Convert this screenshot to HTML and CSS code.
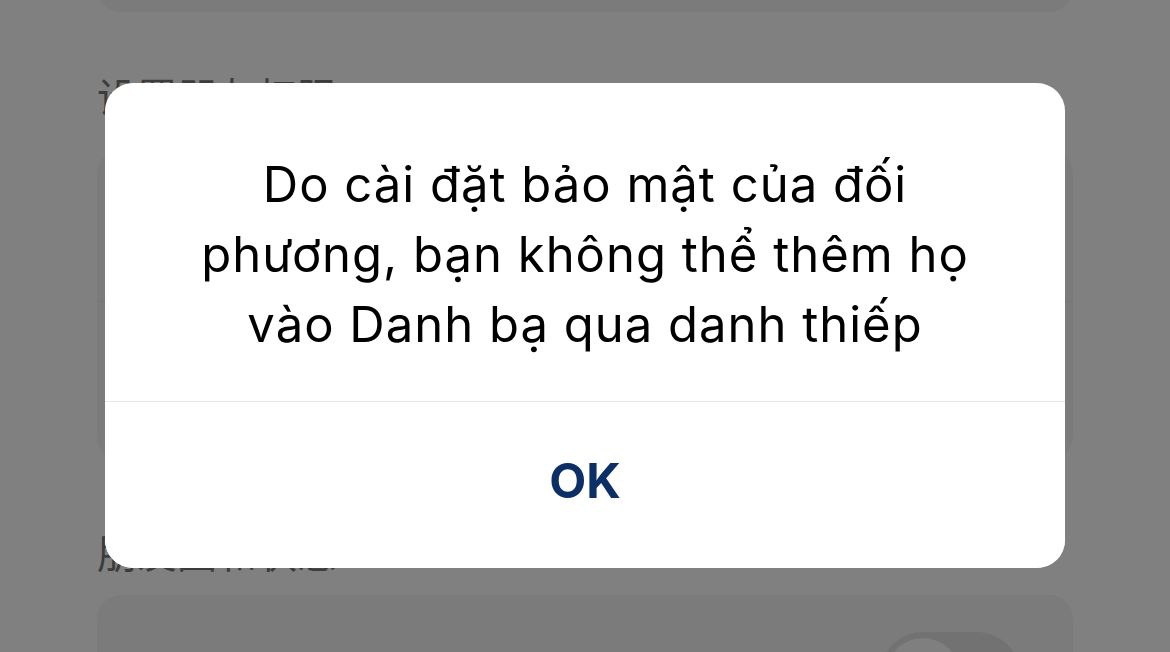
FILE: index.html
```html
<!DOCTYPE html>
<html lang="vi">
<head>
    <meta charset="UTF-8">
    <meta name="viewport" content="width=device-width, initial-scale=1.0">
    <title>Danh thiếp</title>
    <link rel="stylesheet" href="styles.css">
</head>
<body>
    <div class="page">
        <div class="card card-top"></div>

        <h2 class="section-title">设置朋友权限</h2>
        <div class="card card-perm">
            <div class="row"></div>
            <div class="row"></div>
        </div>

        <h2 class="section-title section-title-second">朋友圈和状态</h2>
        <div class="card card-moments">
            <div class="switch"><span class="knob"></span></div>
        </div>
    </div>

    <!-- alert over the page -->
    <div class="overlay">
        <div class="alert">
            <p class="alert-text">Do cài đặt bảo mật của đối<br>phương, bạn không thể thêm họ<br>vào Danh bạ qua danh thiếp</p>
            <button class="alert-button">OK</button>
        </div>
    </div>
</body>
</html>
```

FILE: styles.css
```css
body {
    margin: 0;
    background: #808080;
    font-family: Inter, "Noto Sans", "Noto Sans CJK SC", sans-serif;
}

.page {
    height: 100vh;
    overflow: hidden;
    padding: 0 97px;
}

.card {
    background: #7b7b7b;
    border-radius: 24px;
}

.card-top {
    height: 100px;
    margin-top: -88px;
}

.section-title {
    margin: 0;
    padding: 58px 0 30px 0;
    font-size: 40px;
    font-weight: 400;
    line-height: 50px;
    color: #3c3c3c;
    font-family: "Noto Sans CJK SC", sans-serif;
}

.card-perm {
    height: 310px;
}

.card-perm .row {
    height: 151px;
    border-bottom: 1px solid #747474;
}

.card-perm .row:last-child {
    border-bottom: none;
}

.section-title-second {
    padding: 66px 0 19px 0;
}

.card-moments {
    height: 200px;
    padding: 37px 53px 0 0;
    display: flex;
    justify-content: flex-end;
}

.switch {
    width: 140px;
    height: 86px;
    border-radius: 43px;
    background: #727272;
    padding: 6px;
    box-sizing: border-box;
}

.knob {
    display: block;
    width: 74px;
    height: 74px;
    border-radius: 50%;
    background: #7f7f7f;
}

.overlay {
    position: fixed;
    inset: 0;
}

.alert {
    position: absolute;
    left: 105px;
    top: 83px;
    width: 960px;
    height: 485px;
    background: #fff;
    border-radius: 28px;
    display: flex;
    flex-direction: column;
    overflow: hidden;
}

.alert-text {
    margin: 0;
    padding: 67px 20px 41px;
    border-bottom: 1px solid #e6e6e6;
    text-align: center;
    font-size: 49px;
    letter-spacing: 1px;
    line-height: 70px;
    color: #000;
}

.alert-button {
    flex: 1;
    border: none;
    background: #fff;
    font-family: Inter, "Noto Sans", sans-serif;
    font-size: 48px;
    font-weight: 700;
    color: #0b2f66;
    padding: 0 0 9px;
}
```
